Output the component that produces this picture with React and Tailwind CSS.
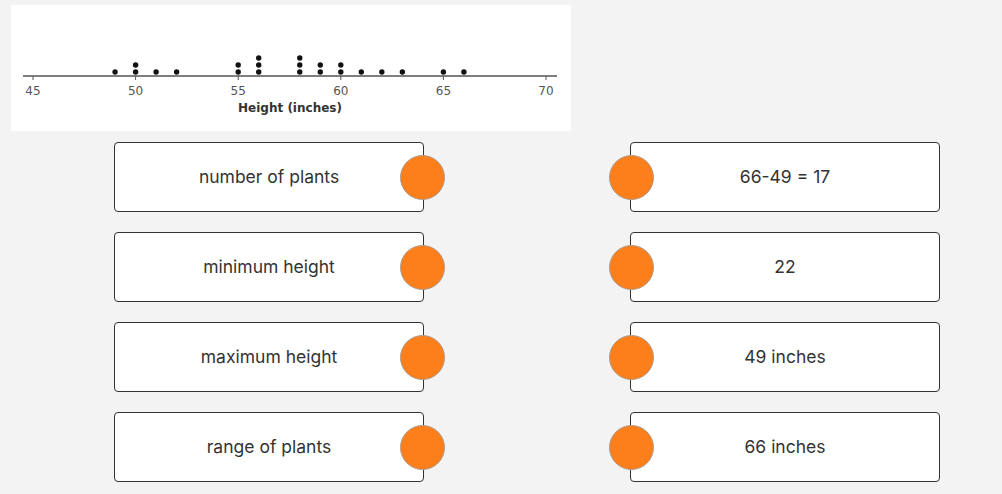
import React from "react";

const data = [
  [49, 1], [50, 2], [51, 1], [52, 1], [55, 2], [56, 3], [58, 3], [59, 2],
  [60, 2], [61, 1], [62, 1], [63, 1], [65, 1], [66, 1],
];

const xOf = (v) => 22 + (v - 45) * 20.52;

function DotPlot() {
  const dots = [];
  data.forEach(([v, n]) => {
    for (let i = 0; i < n; i++) {
      dots.push(<circle key={`${v}-${i}`} cx={xOf(v)} cy={67 - i * 7} r={2.7} fill="#111" />);
    }
  });
  return (
    <svg width="560" height="126" viewBox="0 0 560 126">
      <line x1="12" y1="71" x2="546" y2="71" stroke="#555" strokeWidth="1.4" />
      {[45, 50, 55, 60, 65, 70].map((t) => (
        <g key={t}>
          <line x1={xOf(t)} y1="71" x2={xOf(t)} y2="75" stroke="#555" strokeWidth="1" />
          <text x={xOf(t)} y="89.5" textAnchor="middle" fontSize="12" fill="#555" fontFamily="'DejaVu Sans', sans-serif">{t}</text>
        </g>
      ))}
      {dots}
      <text x="279" y="106.5" textAnchor="middle" fontSize="12" fontWeight="bold" fill="#333" fontFamily="'DejaVu Sans', sans-serif">Height (inches)</text>
    </svg>
  );
}

function Card({ text, side }) {
  return (
    <div className="relative w-[310px] h-[70px] bg-white border border-[#333] rounded-[4px] flex items-center justify-center">
      <span className="text-[17.5px] text-[#333] pt-[1px]">{text}</span>
      <div
        className={
          side === "right"
            ? "absolute left-[285px] top-[12px] w-[45px] h-[45px] rounded-full bg-[#fd7f1c] border border-[#b09a8a]"
            : "absolute left-[-22px] top-[12px] w-[45px] h-[45px] rounded-full bg-[#fd7f1c] border border-[#b09a8a]"
        }
      />
    </div>
  );
}

export default function App() {
  const left = ["number of plants", "minimum height", "maximum height", "range of plants"];
  const right = ["66-49 = 17", "22", "49 inches", "66 inches"];
  return (
    <div className="w-[1002px] h-[494px] bg-[#f3f3f3] overflow-hidden" style={{ fontFamily: "Inter, 'Open Sans', sans-serif" }}>
      <div className="pt-[5px] pl-[11px]">
        <div className="w-[560px] h-[126px] bg-white">
          <DotPlot />
        </div>
      </div>
      <div className="flex pl-[114px] gap-[206px] mt-[11px]">
        <div className="flex flex-col gap-[20px]">
          {left.map((t) => (
            <Card key={t} text={t} side="right" />
          ))}
        </div>
        <div className="flex flex-col gap-[20px]">
          {right.map((t) => (
            <Card key={t} text={t} side="left" />
          ))}
        </div>
      </div>
    </div>
  );
}
